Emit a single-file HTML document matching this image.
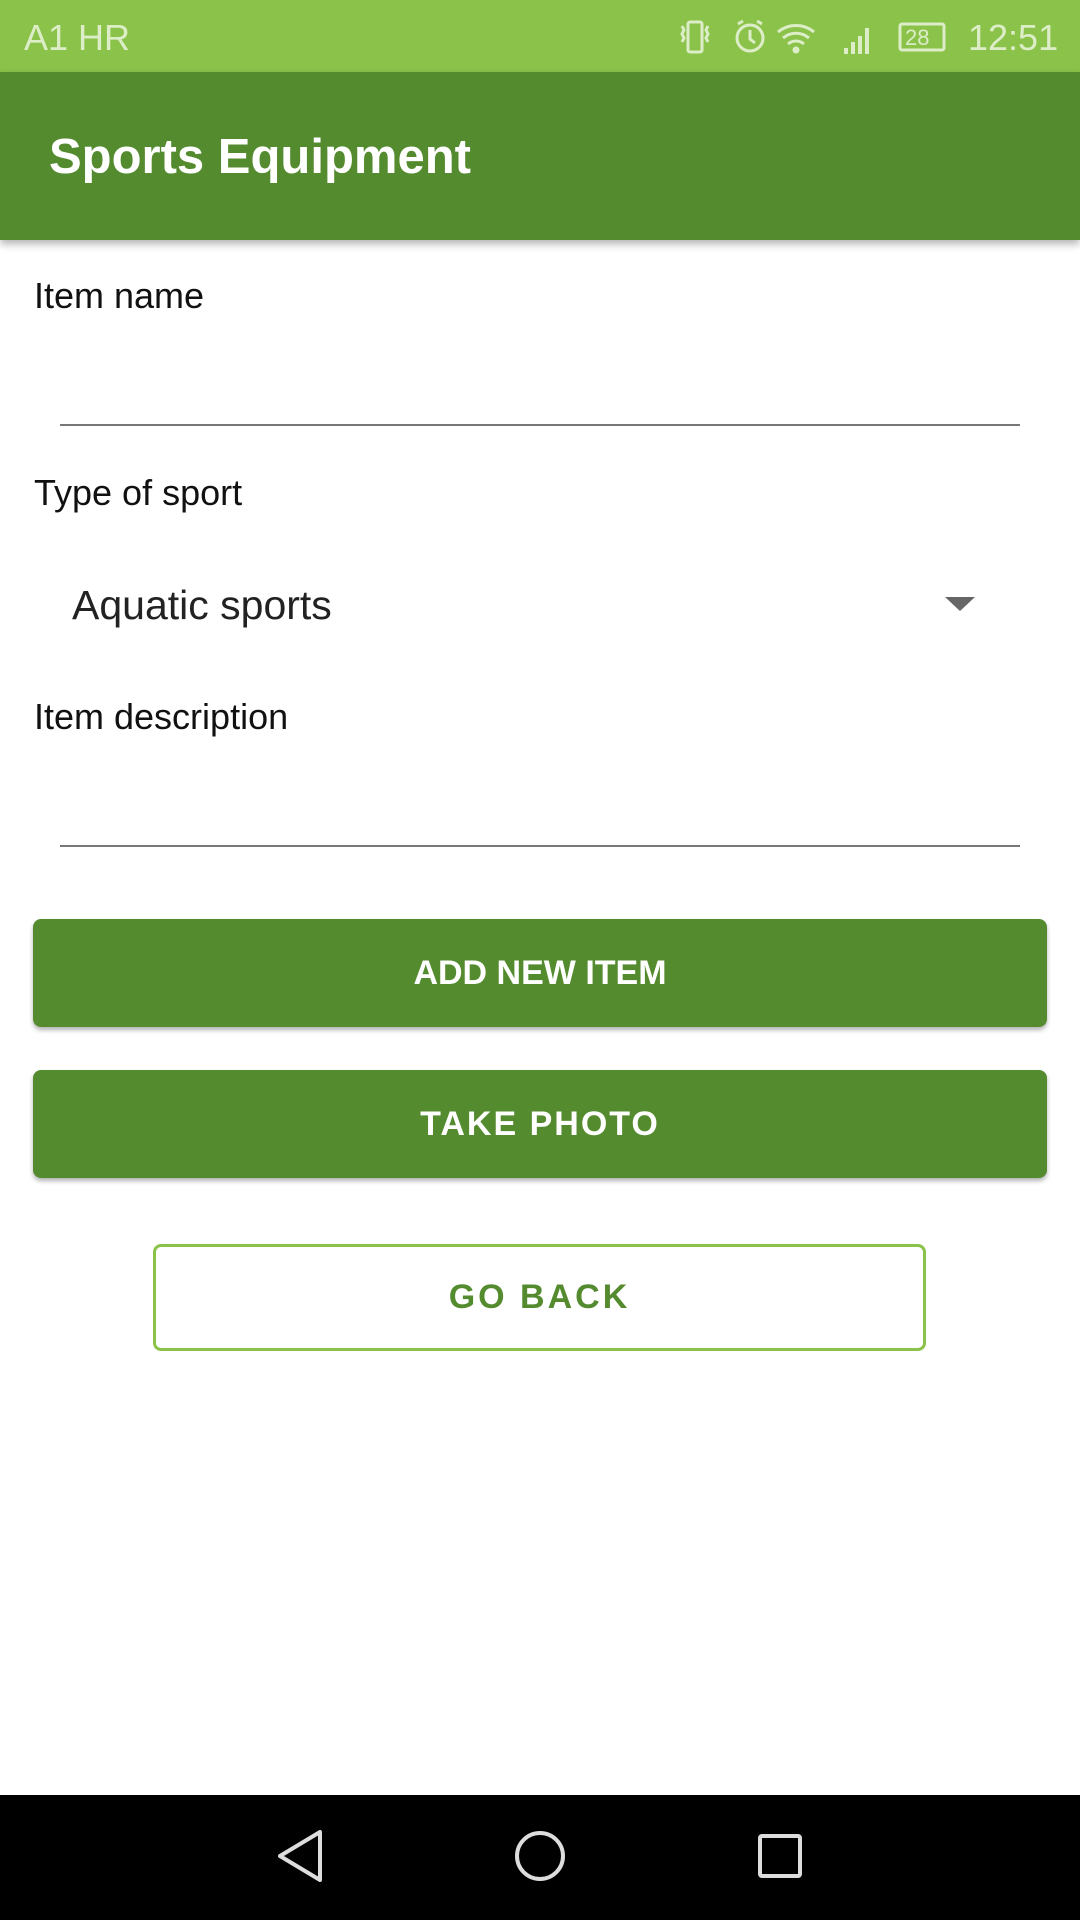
<!DOCTYPE html>
<html><head><meta charset="utf-8"><style>
body{margin:0;width:1080px;height:1920px;position:relative;background:#fff;font-family:"Liberation Sans",sans-serif;overflow:hidden}
.a{position:absolute}
.sb{top:0;left:0;width:1080px;height:72px;background:#8bc34a;color:#dcedc8;font-size:36px}
.tb{top:72px;left:0;width:1080px;height:168px;background:#558b2f;box-shadow:0 4px 8px rgba(0,0,0,.3)}
.lbl{left:34px;font-size:36px;color:#111;line-height:40px}
.line{left:60px;width:960px;height:2px;background:#777}
.btn{left:33px;width:1014px;height:108px;background:#558b2f;border-radius:8px;box-shadow:0 3px 5px rgba(0,0,0,.3);color:#fff;font-size:34px;font-weight:bold;display:flex;align-items:center;justify-content:center}
</style></head><body>
<div class="a sb">
<div class="a" style="left:24px;top:17px">A1 HR</div>
<svg class="a" style="left:678px;top:18px" width="270" height="40" viewBox="0 0 270 40" fill="none" stroke="#dcedc8" stroke-width="3">
<rect x="10" y="4" width="14" height="30" rx="2"/><path d="M4 8l2 4-2 4 2 4-2 4M30 8l-2 4 2 4-2 4 2 4"/>
<circle cx="72" cy="20" r="13"/><path d="M72 12v9l5 4M60 6l5-3M84 6l-5-3"/>
<path d="M100 14a28 28 0 0 1 36 0M105 20a20 20 0 0 1 26 0M110 26a12 12 0 0 1 16 0"/><circle cx="118" cy="32" r="2" fill="#dcedc8"/>
<path d="M168 36v-6M175 36v-12M182 36v-18M189 36v-26" stroke-width="4"/>
<rect x="222" y="6" width="44" height="26" rx="2"/>
</svg>
<div class="a" style="left:905px;top:25px;font-size:22px">28</div>
<div class="a" style="left:968px;top:17px">12:51</div>
</div>
<div class="a tb"><div class="a" style="left:49px;top:57px;color:#fff;font-size:49px;font-weight:bold">Sports Equipment</div></div>
<div class="a lbl" style="top:276px">Item name</div>
<div class="a line" style="top:424px"></div>
<div class="a lbl" style="top:473px">Type of sport</div>
<div class="a" style="left:72px;top:582px;font-size:41px;color:#222">Aquatic sports</div>
<svg class="a" style="left:945px;top:597px" width="30" height="14"><path d="M0 0h30L15 14z" fill="#666"/></svg>
<div class="a lbl" style="top:697px">Item description</div>
<div class="a line" style="top:845px"></div>
<div class="a btn" style="top:919px">ADD NEW ITEM</div>
<div class="a btn" style="top:1070px;letter-spacing:2px">TAKE PHOTO</div>
<div class="a" style="left:153px;top:1244px;width:767px;height:101px;border:3px solid #8bc34a;border-radius:8px;color:#558b2f;font-size:34px;font-weight:bold;letter-spacing:3px;display:flex;align-items:center;justify-content:center">GO BACK</div>
<div class="a" style="left:0;top:1795px;width:1080px;height:125px;background:#000">
<svg width="1080" height="125" fill="none" stroke="#ddd" stroke-width="4">
<path d="M320 37v48L280 61z" stroke-linejoin="round"/>
<circle cx="540" cy="61" r="23"/>
<rect x="760" y="41" width="40" height="40" rx="2"/>
</svg></div>
</body></html>
